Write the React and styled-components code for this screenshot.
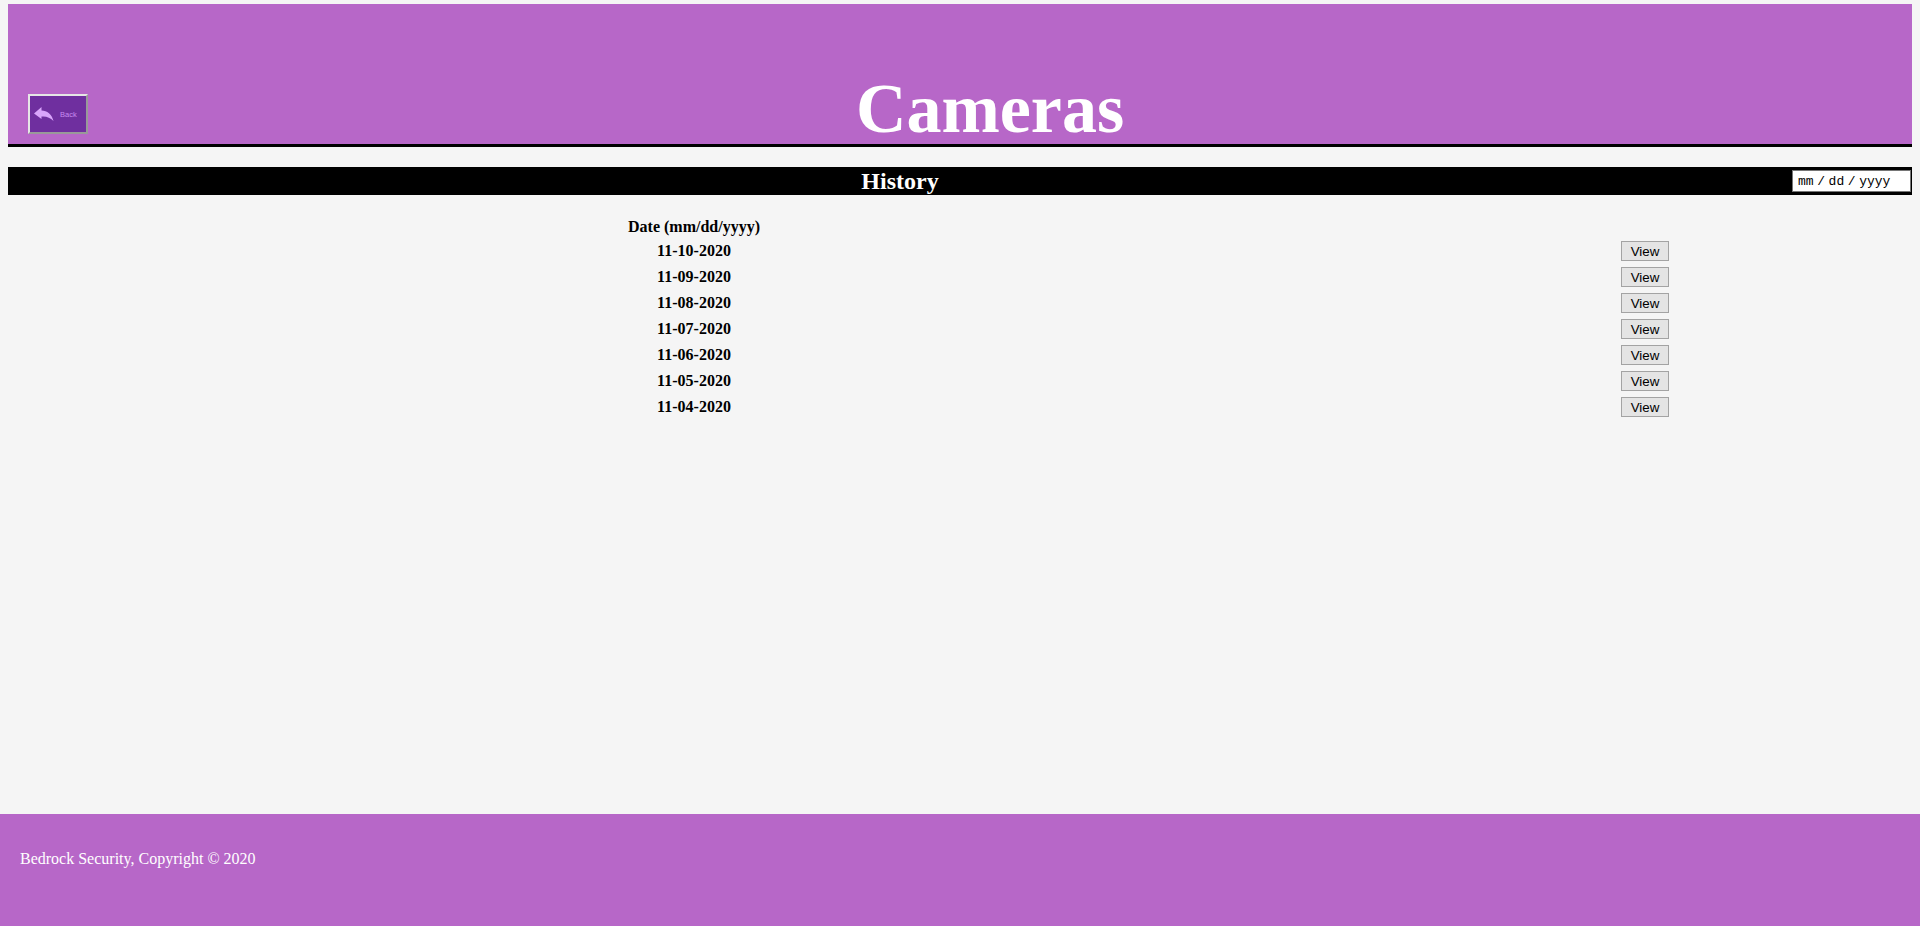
import { Fragment } from 'react';
import styled, { createGlobalStyle } from 'styled-components';

const GlobalStyle = createGlobalStyle`
  html, body {
    margin: 0;
    padding: 0;
    background: #f5f5f5;
    font-family: "Liberation Serif", "Times New Roman", serif;
  }
`;

const Page = styled.div`
  display: flex;
  flex-direction: column;
  height: 926px;
  overflow: hidden;
`;

const Main = styled.main`
  flex: 1;
  padding: 4px 8px 0;
`;

const Header = styled.header`
  display: flex;
  align-items: flex-end;
  height: 140px;
  background: #b767c8;
  border-bottom: 3px solid #000;
`;

const BackButton = styled.button`
  display: flex;
  align-items: center;
  box-sizing: border-box;
  width: 60px;
  height: 40px;
  margin: 0 0 10px 20px;
  padding: 0 0 0 4px;
  background: #6f2f9f;
  border: 2px solid;
  border-color: #e6e6e6 #999 #999 #e6e6e6;
  color: #c88cf0;
  font-family: "Liberation Sans", Arial, sans-serif;
  font-size: 7.5px;
`;

const BackLabel = styled.span`
  margin-left: 6px;
`;

const Title = styled.h1`
  flex: 1;
  margin: 0 0 0 -20px;
  color: #fff;
  font-size: 70px;
  font-weight: 700;
  line-height: 70px;
  text-align: center;
`;

const HistoryBar = styled.div`
  display: flex;
  align-items: center;
  height: 28px;
  margin-top: 20px;
  background: #000;
`;

const HistoryTitle = styled.h2`
  flex: 1;
  margin: 0;
  color: #fff;
  font-size: 24px;
  font-weight: 700;
  line-height: 28px;
  text-align: center;
`;

const DateInput = styled.input`
  box-sizing: border-box;
  width: 119px;
  height: 22px;
  padding: 0 0 0 5px;
  margin-right: 1px;
  background: #fff;
  border: 1px solid #767676;
  color: #000;
  font-family: "Liberation Mono", "Courier New", monospace;
  font-size: 13px;
  word-spacing: -4.2px;
`;

const HistoryTable = styled.div`
  display: grid;
  grid-template-columns: 620px 132px 855px 60px;
  grid-template-rows: 24px;
  grid-auto-rows: 26px;
  margin-top: 19px;
  font-size: 16px;
  font-weight: 700;
  line-height: 26px;
  color: #000;
`;

const DateCell = styled.div`
  grid-column: 2;
  text-align: center;
  white-space: nowrap;
`;

const ActionCell = styled.div`
  grid-column: 4;
  display: flex;
  align-items: center;
  justify-content: center;
`;

const ViewButton = styled.button`
  box-sizing: border-box;
  width: 48px;
  height: 20px;
  padding: 0;
  background: #e4e4e4;
  border: 1px solid #a3a3a3;
  color: #000;
  font-family: "Liberation Sans", Arial, sans-serif;
  font-size: 13.33px;
`;

const Footer = styled.footer`
  height: 112px;
  box-sizing: border-box;
  padding: 35px 20px 0;
  background: #b767c8;
  color: #fff;
  font-size: 16px;
  line-height: 20px;
`;

const dates = [
  '11-10-2020',
  '11-09-2020',
  '11-08-2020',
  '11-07-2020',
  '11-06-2020',
  '11-05-2020',
  '11-04-2020',
];

const BackArrow = () => (
  <svg width="20" height="16" viewBox="0 0 20 16">
    <path d="M0 7.5 L7.5 1 L7.5 4.5 C13 4.5 18 8.5 19.5 15 C16 11.5 12.5 10 7.5 10.5 L7.5 13 Z" fill="#d9a5fb" />
  </svg>
);

export default function App() {
  return (
    <Page>
      <GlobalStyle />
      <Main>
        <Header>
          <BackButton>
            <BackArrow />
            <BackLabel>Back</BackLabel>
          </BackButton>
          <Title>Cameras</Title>
        </Header>
        <HistoryBar>
          <HistoryTitle>History</HistoryTitle>
          <DateInput readOnly value="mm / dd / yyyy" />
        </HistoryBar>
        <HistoryTable>
          <DateCell>Date (mm/dd/yyyy)</DateCell>
          <ActionCell />
          {dates.map((d) => (
            <Fragment key={d}>
              <DateCell>{d}</DateCell>
              <ActionCell>
                <ViewButton>View</ViewButton>
              </ActionCell>
            </Fragment>
          ))}
        </HistoryTable>
      </Main>
      <Footer>Bedrock Security, Copyright © 2020</Footer>
    </Page>
  );
}
